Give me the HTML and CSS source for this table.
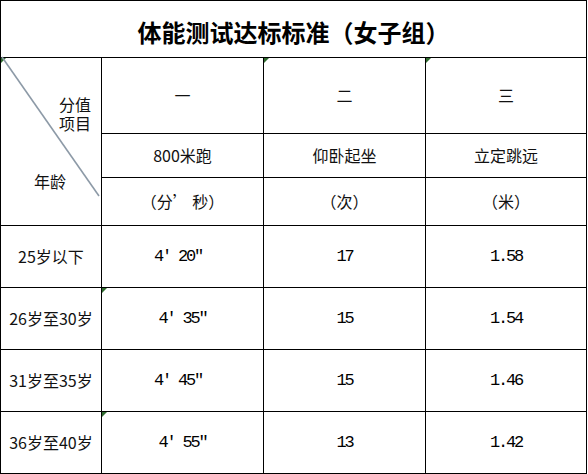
FILE: index.html
```html
<!DOCTYPE html>
<html lang="zh-CN">
<head>
<meta charset="utf-8">
<title>体能测试达标标准（女子组）</title>
<link rel="stylesheet" href="styles.css">
</head>
<body>
<div class="sheet">
  <div class="cell title">体能测试达标标准（女子组）</div>

  <div class="cell diag flag">
    <svg class="diag-line" width="100" height="167" viewBox="0 0 100 167">
      <line x1="1" y1="-1" x2="98" y2="138" />
    </svg>
    <div class="diag-top"><span>分值</span><span>项目</span></div>
    <div class="diag-bottom">年龄</div>
  </div>
  <div class="cell">一</div>
  <div class="cell flag">二</div>
  <div class="cell flag">三</div>

  <div class="cell">800米跑</div>
  <div class="cell">仰卧起坐</div>
  <div class="cell">立定跳远</div>

  <div class="cell">（分’&nbsp;秒）</div>
  <div class="cell">（次）</div>
  <div class="cell">（米）</div>

  <div class="cell">25岁以下</div>
  <div class="cell num shift">4′ 20″</div>
  <div class="cell num">17</div>
  <div class="cell num">1.58</div>

  <div class="cell">26岁至30岁</div>
  <div class="cell num flag">4′ 35″</div>
  <div class="cell num">15</div>
  <div class="cell num">1.54</div>

  <div class="cell">31岁至35岁</div>
  <div class="cell num shift">4′ 45″</div>
  <div class="cell num">15</div>
  <div class="cell num">1.46</div>

  <div class="cell">36岁至40岁</div>
  <div class="cell num flag">4′ 55″</div>
  <div class="cell num">13</div>
  <div class="cell num">1.42</div>
</div>
</body>
</html>
```

FILE: styles.css
```css
html, body {
  margin: 0;
  padding: 0;
  background: #fff;
}

.sheet {
  display: grid;
  grid-template-columns: 100px 161px 161px 160px;
  grid-template-rows: 56px 75px 43px 47px 61px 61px 61px 61px;
  gap: 1px;
  padding: 1px;
  width: 585px;
  background: #000;
  font-family: "Noto Sans CJK SC", "Noto Sans", sans-serif;
  font-size: 16px;
  color: #111;
}

.cell {
  position: relative;
  background: #fff;
  display: flex;
  align-items: center;
  justify-content: center;
  line-height: 19px;
  white-space: nowrap;
}

.title {
  grid-column: 1 / 5;
  font-size: 24px;
  font-weight: 700;
  padding-top: 4px;
  color: #000;
}

.diag {
  grid-row: 2 / 5;
  grid-column: 1;
  flex-direction: column;
  align-items: stretch;
  justify-content: flex-start;
  padding: 37px 10px 0 33px;
}

.diag-line {
  position: absolute;
  left: 0;
  top: 0;
  overflow: visible;
}

.diag-line line {
  stroke: #8d9aa7;
  stroke-width: 1.6;
}

.diag-top {
  display: flex;
  flex-direction: column;
  align-items: flex-end;
}

.diag-bottom {
  margin-top: 39px;
}

.num {
  font-family: "Liberation Mono", "DejaVu Sans Mono", monospace;
  font-size: 17px;
  letter-spacing: -2.2px;
  color: #000;
}

.shift {
  padding-right: 9px;
}

.flag::before {
  content: "";
  position: absolute;
  left: 0;
  top: 0;
  width: 0;
  height: 0;
  border-top: 5px solid #2f6b2f;
  border-right: 5px solid transparent;
}
```
